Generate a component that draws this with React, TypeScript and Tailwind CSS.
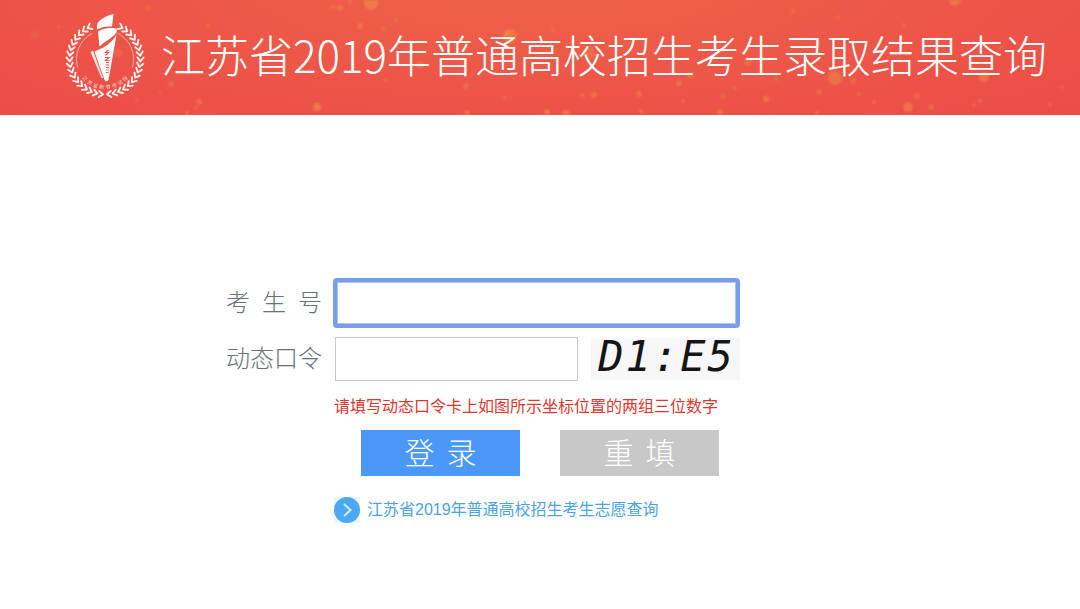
import { useState } from "react";

const DOTS: [number, number, number, number][] = [
  [371, 3, 7, 0.45], [340, 8, 3, 0.35], [333, 7, 2, 0.3], [360, 26, 3, 0.35], [384, 29, 2, 0.3], [510, 36, 7, 0.4],
  [507, 33, 2, 0.4], [148, 8, 3, 0.2], [208, 25, 2, 0.2], [118, 53, 4, 0.25], [59, 27, 2, 0.25], [35, 35, 4, 0.15],
  [171, 84, 3, 0.3], [199, 102, 3, 0.35], [196, 108, 2, 0.3], [317, 107, 4, 0.5], [332, 70, 3, 0.4], [420, 65, 4, 0.3],
  [406, 51, 2, 0.3], [466, 86, 3, 0.3], [467, 113, 3, 0.35], [505, 98, 2, 0.3], [386, 80, 2, 0.3], [137, 100, 2, 0.25],
  [187, 113, 2, 0.4], [160, 93, 2, 0.2], [594, 95, 3, 0.4], [582, 95, 2, 0.35], [547, 112, 3, 0.45], [566, 114, 4, 0.4],
  [639, 94, 3, 0.35], [641, 111, 2, 0.35], [679, 83, 3, 0.4], [690, 75, 3, 0.35], [683, 101, 2, 0.3], [720, 112, 3, 0.4],
  [723, 96, 2, 0.3], [735, 88, 2, 0.3], [766, 99, 3, 0.4], [776, 79, 2, 0.3], [835, 78, 7, 0.4], [819, 92, 3, 0.3],
  [853, 81, 3, 0.3], [859, 94, 2, 0.3], [874, 102, 2, 0.35], [908, 107, 5, 0.4], [917, 96, 3, 0.3], [931, 107, 3, 0.3],
  [974, 105, 2, 0.3], [980, 101, 2, 0.35], [984, 77, 5, 0.4], [955, 0, 6, 0.4], [793, 11, 2, 0.25], [838, 17, 2, 0.25],
  [589, 53, 6, 0.3], [748, 62, 4, 0.3], [553, 30, 2, 0.3], [904, 25, 2, 0.3], [1050, 105, 2, 0.3], [1062, 87, 2, 0.25],
  [817, 113, 2, 0.35], [572, 42, 2, 0.3], [1000, 48, 3, 0.2], [350, 2, 2, 0.3], [396, 20, 2, 0.3],
];

const LEAF_ANGLES = Array.from({ length: 17 }, (_, i) => 27 + i * 9.2);

function Emblem() {
  return (
    <svg viewBox="0 0 80 88" className="h-22 w-20 shrink-0" role="img" aria-label="江苏省教育考试院">
      {[1, -1].map((side) => (
        <g key={side} transform={`translate(40 47) scale(${side} 1)`} fill="none" stroke="#fff" strokeWidth="1.9" strokeLinecap="round" strokeLinejoin="round">
          {LEAF_ANGLES.map((a) => (
            <path key={a} d="M-2.4 -38.4 L1.6 -35.4 L-2.4 -32.4" transform={`rotate(${a})`} opacity="0.92" />
          ))}
          <path d="M13 -25.500 A28.500 28.500 0 0 1 27.500 8" strokeWidth="1" opacity="0.5" />
        </g>
      ))}
      <g fill="#fff">
        <path d="M32 16.500 C31 10 36 5.500 48.500 2 Q48 8 47 14.500 Q38 14 32 17.500 Z" />
        <path d="M33 19.500 Q39 15.500 47 16 Q52.500 15.500 52 19 C50 25 40 29 34.500 34.500 Z" />
        <path d="M51.500 23 L43.500 68 Q41.500 70.500 39.500 68 L29.500 39.500 Q45 34 51.500 23 Z" />
        <path d="M25.500 40 L28 38.500 L38 66 L36.500 66 Z" opacity="0.85" />
      </g>
      <path
        d="M43.500 38 l-3 2.500 h3 l-3 3 M40 45.500 h4 l-3.500 3 h4 M41 50.500 h3 M40.500 53 h3.500 M41 55.500 h3 M41 58 h2.500 M41 60.500 h2.500"
        fill="none" stroke="#ee5347" strokeWidth="1.1"
      />
      <g fill="#fff" opacity="0.75" fontFamily="Noto Sans CJK SC, sans-serif" fontSize="5" textAnchor="middle">
        {"江苏省教育考试院".split("").map((c, i) => (
          <text key={i} x="40" y="77" transform={`rotate(${(3.5 - i) * 13} 40 47)`}>{c}</text>
        ))}
      </g>
    </svg>
  );
}

export default function App() {
  const [id, setId] = useState("");
  const [code, setCode] = useState("");
  return (
    <div className="min-h-screen bg-white font-['Liberation_Sans','Noto_Sans_CJK_SC',sans-serif]">
      <header className="relative h-[115px] overflow-hidden bg-[radial-gradient(ellipse_at_50%_-10%,#ee6349_0%,#ed5748_50%,#ec4c47_100%)]">
        <svg aria-hidden="true" viewBox="0 0 1080 115" preserveAspectRatio="xMidYMid slice" className="absolute inset-0 size-full blur-[1px]">
          {DOTS.map(([x, y, r, o], i) => (
            <circle key={i} cx={x} cy={y} r={r} fill="#f0a04c" opacity={o} />
          ))}
        </svg>
        <div className="relative flex h-full items-center justify-center gap-4 pb-1 pl-8">
          <Emblem />
          <h1 className="pb-1 whitespace-nowrap font-['Noto_Sans_CJK_SC',sans-serif] text-[44px] leading-none font-light text-white">
            江苏省2019年普通高校招生考生录取结果查询
          </h1>
        </div>
      </header>

      <main className="flex justify-center pt-[163px] pr-[114px]">
        <form className="w-[514px]" onSubmit={(e) => e.preventDefault()}>
          <div className="flex h-[50px] items-center gap-[11px]">
            <label htmlFor="candidate" className="flex w-24 justify-between pb-1 font-['Noto_Sans_CJK_SC',sans-serif] text-2xl font-light text-[#6b6f78]">
              <span>考</span><span>生</span><span>号</span>
            </label>
            <input
              id="candidate"
              autoFocus
              value={id}
              onChange={(e) => setId(e.target.value)}
              className="h-[50px] min-w-0 flex-1 rounded-[4px] border-4 border-[#769eed] bg-white px-3 text-2xl ring-1 ring-[#a9c4f7] outline-none ring-inset"
            />
          </div>
          <div className="mt-2 flex h-[45px] items-center gap-[13px]">
            <label htmlFor="token" className="w-24 pb-1 font-['Noto_Sans_CJK_SC',sans-serif] text-2xl font-light text-[#6b6f78]">动态口令</label>
            <input
              id="token"
              value={code}
              onChange={(e) => setCode(e.target.value)}
              className="h-11 w-[243px] border border-[#c8c8c8] bg-white px-3 text-2xl outline-none"
            />
            <span className="flex h-[42px] flex-1 items-center justify-center gap-0.5 bg-[#f7f7f7] pb-1 font-['DejaVu_Sans_Mono',monospace] text-[42px] leading-none text-[#151515] italic">
              <span>D</span><span>1</span><span>:</span><span>E</span><span>5</span>
            </span>
          </div>
          <div className="pl-[108px]">
            <p className="mt-[14px] text-base leading-6 whitespace-nowrap text-[#dc382f]">请填写动态口令卡上如图所示坐标位置的两组三位数字</p>
            <div className="mt-[11px] flex gap-10 pl-[27px] font-['Noto_Sans_CJK_SC',sans-serif] text-3xl font-light text-white">
              <button type="submit" className="flex h-[46px] w-[159px] items-center justify-center gap-3 bg-[#4c98f8] pb-1">
                <span>登</span><span>录</span>
              </button>
              <button type="reset" onClick={() => { setId(""); setCode(""); }} className="flex h-[46px] w-[159px] items-center justify-center gap-3 bg-[#c8c8c8] pb-1">
                <span>重</span><span>填</span>
              </button>
            </div>
            <a href="#volunteer" className="mt-[21px] flex items-center gap-[7px] text-base leading-6 whitespace-nowrap text-[#4ba3e3]">
              <svg viewBox="0 0 26 26" className="size-[26px]" aria-hidden="true">
                <rect width="26" height="26" fill="#f3f3f3" />
                <circle cx="13" cy="13" r="13" fill="#4aa9f3" />
                <path d="M10 7 L16.500 13 L10 19" fill="none" stroke="#d5ebfc" strokeWidth="2" />
              </svg>
              江苏省2019年普通高校招生考生志愿查询
            </a>
          </div>
        </form>
      </main>
    </div>
  );
}
